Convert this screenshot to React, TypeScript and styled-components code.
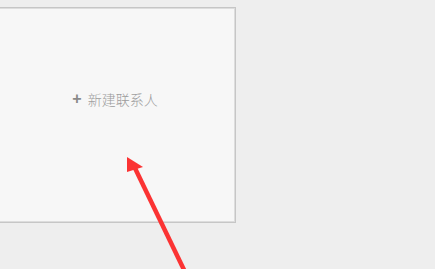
import React from "react";
import styled, { createGlobalStyle } from "styled-components";

const Global = createGlobalStyle`
  html, body { margin: 0; padding: 0; background: #eeeeee; }
  body { width: 435px; height: 269px; overflow: hidden; position: relative; }
`;

const Page = styled.div`
  width: 435px;
  height: 269px;
  padding-top: 7px;
  box-sizing: border-box;
  position: relative;
`;

const Card = styled.div`
  margin-left: -2px;
  width: 238px;
  height: 216px;
  box-sizing: border-box;
  background: #f7f7f7;
  border: 1px solid #c6c6c6;
  box-shadow: inset 0 0 0 1px #dddddd;
  display: flex;
  justify-content: center;
  padding-top: 83px;
`;

const AddButton = styled.div`
  display: flex;
  align-items: center;
  gap: 6px;
  height: 16px;
  font-family: "Noto Sans CJK SC", "Liberation Sans", sans-serif;
  font-size: 14px;
  font-weight: 300;
  color: #9c9c9c;
  margin-left: -4px;
`;

const Plus = styled.span`
  font-family: "Liberation Sans", sans-serif;
  font-size: 16px;
  font-weight: 700;
  color: #8a8a8a;
  line-height: 16px;
`;

const Arrow = styled.svg`
  position: absolute;
  left: 0;
  top: 0;
  pointer-events: none;
`;

export default function App() {
  return (
    <>
      <Global />
      <Page>
        <Card>
          <AddButton>
            <Plus>+</Plus>
            <span>新建联系人</span>
          </AddButton>
        </Card>
        <Arrow width="435" height="269" viewBox="0 0 435 269">
          <polygon points="127,157 127,172 143,167" fill="#fb3333" />
          <line x1="133" y1="164" x2="186" y2="274" stroke="#fb3333" strokeWidth="4.5" />
        </Arrow>
      </Page>
    </>
  );
}
